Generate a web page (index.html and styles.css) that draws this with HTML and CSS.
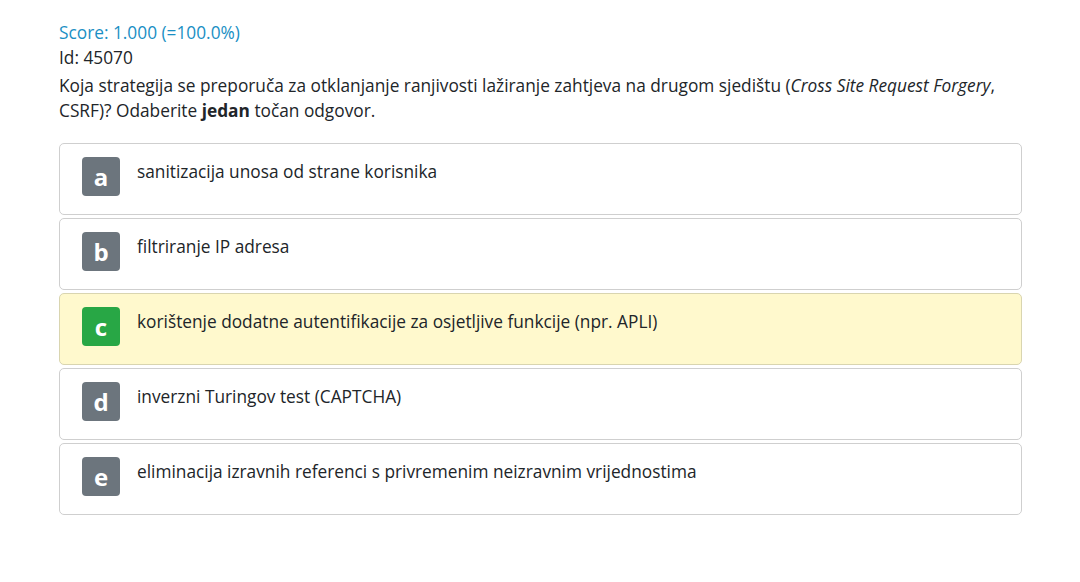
FILE: index.html
```html
<!DOCTYPE html>
<html>
<head>
<meta charset="utf-8">
<link rel="stylesheet" href="styles.css">
</head>
<body>
<div class="page">
  <div class="score">Score: 1.000 (=100.0%)</div>
  <div class="qid">Id: 45070</div>
  <div class="question">Koja strategija se preporuča za otklanjanje ranjivosti lažiranje zahtjeva na drugom sjedištu (<i>Cross Site Request Forgery</i>, CSRF)? Odaberite <b>jedan</b> točan odgovor.</div>
  <div class="options">
    <div class="option"><span class="badge">a</span><span class="otext">sanitizacija unosa od strane korisnika</span></div>
    <div class="option"><span class="badge">b</span><span class="otext">filtriranje IP adresa</span></div>
    <div class="option correct"><span class="badge">c</span><span class="otext">korištenje dodatne autentifikacije za osjetljive funkcije (npr. APLI)</span></div>
    <div class="option"><span class="badge">d</span><span class="otext">inverzni Turingov test (CAPTCHA)</span></div>
    <div class="option"><span class="badge">e</span><span class="otext">eliminacija izravnih referenci s privremenim neizravnim vrijednostima</span></div>
  </div>
</div>
</body>
</html>
```
FILE: styles.css
```css
html, body { margin: 0; padding: 0; background: #fff; }
body { font-family: "Open Sans", "Noto Sans", sans-serif; color: #212529; font-size: 17.3px; line-height: 25px; }
.page { padding: 20px 58px 0 59px; width: 963px; }
.score { color: #1a8fc4; }
.question { margin-top: 3px; }
.options { margin-top: 20px; display: flex; flex-direction: column; gap: 3px; }
.option { display: flex; align-items: flex-start; border: 1px solid #cfcfcf; border-radius: 5px; padding: 13px 0 0 22px; box-sizing: border-box; height: 72px; background: #fff; }
.option.correct { background: #fff9cd; border-color: #d9d5b0; }
.badge { width: 38px; height: 39px; border-radius: 4px; background: #6c757d; color: #fff; font-weight: 700; font-size: 24px; display: flex; align-items: center; justify-content: center; line-height: 1; flex: none; }
.correct .badge { background: #28a745; }
.otext { margin-left: 17px; margin-top: 2px; }
```
